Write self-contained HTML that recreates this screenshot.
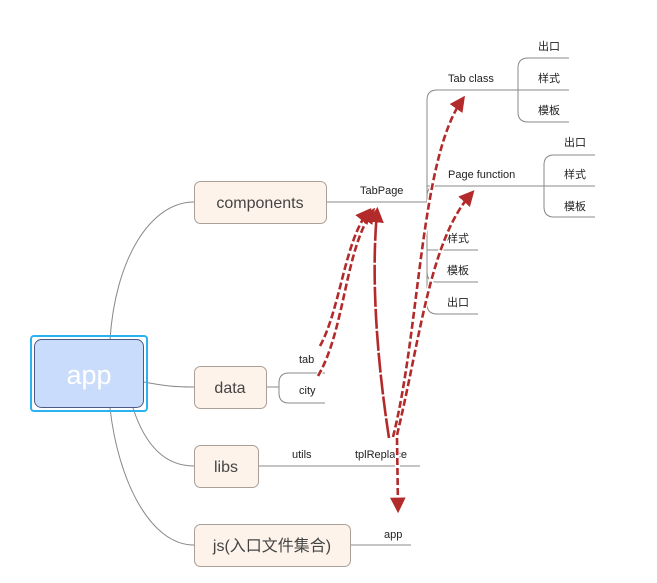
<!DOCTYPE html>
<html><head><meta charset="utf-8"><style>
html,body{margin:0;padding:0;background:#fff;width:657px;height:583px;overflow:hidden}
svg{display:block}
text{font-family:"Liberation Sans","Noto Sans CJK SC",sans-serif;fill:#222}
</style></head><body>
<svg width="657" height="583" viewBox="0 0 657 583">
<defs>
<marker id="ah" markerWidth="6" markerHeight="6" refX="4" refY="3" orient="auto" markerUnits="strokeWidth">
<path d="M0,0 L6,3 L0,6 z" fill="#b22a2a"/>
</marker>
</defs>
<g fill="none" stroke="#888" stroke-width="1">
<path d="M110,340 C115,260 150,202 194,202"/>
<path d="M144,382 C165,386 175,387 194,387"/>
<path d="M133,408 C145,445 165,466 194,466"/>
<path d="M110,408 C118,480 150,545 194,545"/>
<path d="M326,202 H427"/>
<path d="M437,90 Q427,90 427,100 V304 Q427,314 437,314 H478"/>
<path d="M437,90 H569"/>
<path d="M437,186 Q427,186 427,196 M427,186 H595"/>
<path d="M427,250 H478"/>
<path d="M427,272 Q427,282 437,282 H478"/>
<path d="M528,58 Q518,58 518,68 V112 Q518,122 528,122 H569 M528,58 H569 M518,90 H569"/>
<path d="M554,155 Q544,155 544,165 V207 Q544,217 554,217 H595 M554,155 H595 M544,186 H595"/>
<path d="M266,387 H279"/>
<path d="M289,373 Q279,373 279,383 V393 Q279,403 289,403 H325 M289,373 H325"/>
<path d="M258,466 H420"/>
<path d="M350,545 H411"/>
</g>
<rect x="31" y="336" width="116" height="75" rx="3" fill="none" stroke="#2bb3f0" stroke-width="2"/>
<rect x="34.5" y="339.5" width="109" height="68" rx="7" fill="#c9dcfb" stroke="#4d5a85" stroke-width="1"/>
<text x="89" y="384" font-size="27" text-anchor="middle" style="fill:#fff">app</text>
<g fill="#fdf3ea" stroke="#aa9f97" stroke-width="1">
<rect x="194.5" y="181.5" width="132" height="42" rx="6"/>
<rect x="194.5" y="366.5" width="72" height="42" rx="6"/>
<rect x="194.5" y="445.5" width="64" height="42" rx="6"/>
<rect x="194.5" y="524.5" width="156" height="42" rx="6"/>
</g>
<g font-size="16" text-anchor="middle">
<text x="260" y="208" style="fill:#444">components</text>
<text x="230" y="393" style="fill:#444">data</text>
<text x="226" y="472" style="fill:#444">libs</text>
<text x="272" y="551" style="fill:#444">js(入口文件集合)</text>
</g>
<g font-size="11">
<text x="360" y="194">TabPage</text>
<text x="448" y="82">Tab class</text>
<text x="448" y="178">Page function</text>
<text x="538" y="50">出口</text>
<text x="538" y="82">样式</text>
<text x="538" y="114">模板</text>
<text x="564" y="146">出口</text>
<text x="564" y="178">样式</text>
<text x="564" y="210">模板</text>
<text x="447" y="242">样式</text>
<text x="447" y="274">模板</text>
<text x="447" y="306">出口</text>
<text x="299" y="363">tab</text>
<text x="299" y="394">city</text>
<text x="292" y="458">utils</text>
<text x="355" y="458">tplReplace</text>
<text x="384" y="538">app</text>
</g>
<g fill="none" stroke-linecap="butt">
<g stroke="#fff" stroke-width="5">
<path d="M320,346 C340,310 345,240 368,212"/>
<path d="M318,376 C345,330 345,250 372,212"/>
<path d="M389,438 C380,380 370,290 377,212"/>
<path d="M393,437 C420,330 420,160 462,100"/>
<path d="M397,435 C420,340 430,240 471,194"/>
<path d="M397,438 L398,508"/>
</g>
<g stroke="#b22a2a" stroke-width="2.6" stroke-dasharray="7,3" marker-end="url(#ah)">
<path d="M320,346 C340,310 345,240 368,212"/>
<path d="M318,376 C345,330 345,250 372,212"/>
<path d="M389,438 C380,380 370,290 377,212" stroke-dasharray="20,2"/>
<path d="M393,437 C420,330 420,160 462,100"/>
<path d="M397,435 C420,340 430,240 471,194"/>
<path d="M397,438 L398,508"/>
</g>
</g>
</svg>
</body></html>
